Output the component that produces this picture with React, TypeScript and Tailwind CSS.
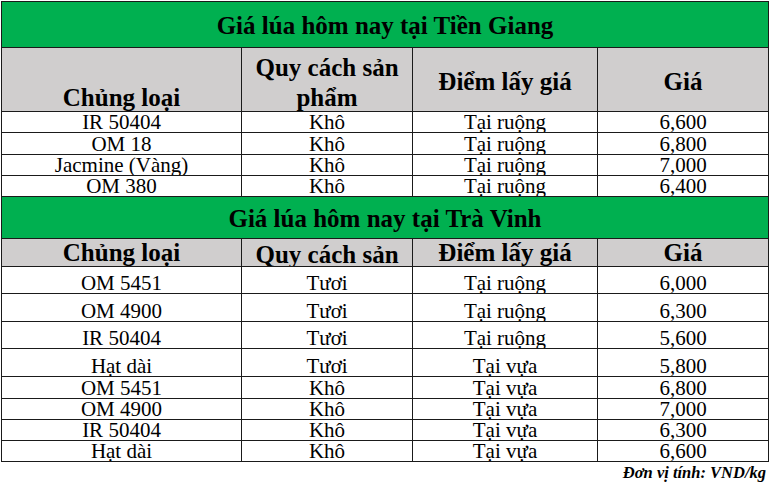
import React from 'react';

type Row = { name: string; spec: string; place: string; price: string; h: string };

const tienGiang: Row[] = [
  { name: 'IR 50404', spec: 'Khô', place: 'Tại ruộng', price: '6,600', h: 'h-[21px]' },
  { name: 'OM 18', spec: 'Khô', place: 'Tại ruộng', price: '6,800', h: 'h-[22px]' },
  { name: 'Jacmine (Vàng)', spec: 'Khô', place: 'Tại ruộng', price: '7,000', h: 'h-[21px]' },
  { name: 'OM 380', spec: 'Khô', place: 'Tại ruộng', price: '6,400', h: 'h-[21px]' },
];

const traVinh: Row[] = [
  { name: 'OM 5451', spec: 'Tươi', place: 'Tại ruộng', price: '6,000', h: 'h-[27px]' },
  { name: 'OM 4900', spec: 'Tươi', place: 'Tại ruộng', price: '6,300', h: 'h-[28px]' },
  { name: 'IR 50404', spec: 'Tươi', place: 'Tại ruộng', price: '5,600', h: 'h-[27px]' },
  { name: 'Hạt dài', spec: 'Tươi', place: 'Tại vựa', price: '5,800', h: 'h-[28px]' },
  { name: 'OM 5451', spec: 'Khô', place: 'Tại vựa', price: '6,800', h: 'h-[22px]' },
  { name: 'OM 4900', spec: 'Khô', place: 'Tại vựa', price: '7,000', h: 'h-[21px]' },
  { name: 'IR 50404', spec: 'Khô', place: 'Tại vựa', price: '6,300', h: 'h-[21px]' },
  { name: 'Hạt dài', spec: 'Khô', place: 'Tại vựa', price: '6,600', h: 'h-[21px]' },
];

const grid = 'grid grid-cols-[240px_171px_185px_171px]';
const cell = 'flex justify-center overflow-hidden border-r border-b border-[#1a1a1a]';

const TitleRow = ({ text, h }: { text: string; h: string }) => (
  <div
    className={`${h} flex items-center justify-center border-r border-b border-[#1a1a1a] bg-[#00b050] pt-[3px] text-[25px] font-bold leading-[30px] text-black`}
  >
    {text}
  </div>
);

const DataRow = ({ row }: { row: Row }) => (
  <div className={`${grid} ${row.h} text-[21px] leading-[20px] text-black`}>
    {[row.name, row.spec, row.place, row.price].map((v, i) => (
      <div key={i} className={`${cell} items-end`}>
        <span className="whitespace-nowrap">{v}</span>
      </div>
    ))}
  </div>
);

const App: React.FC = () => {
  return (
    <div
      className="min-h-[489px] w-[770px] bg-white pt-px pl-px"
      style={{ fontFamily: '"Liberation Serif", "Times New Roman", serif' }}
    >
      <div className="w-[768px] border-l border-t border-[#1a1a1a]">
        {/* Tiền Giang */}
        <TitleRow text="Giá lúa hôm nay tại Tiền Giang" h="h-[46px]" />
        <div className={`${grid} h-[64px] bg-[#d0cece] text-[25px] font-bold leading-[30px]`}>
          <div className={`${cell} items-end`}>
            <span className="-mb-[2px]">Chủng loại</span>
          </div>
          <div className={`${cell} items-end`}>
            <span className="-mb-[2px] text-center">
              Quy cách sản
              <br />
              phẩm
            </span>
          </div>
          <div className={`${cell} items-center pt-[4px]`}>Điểm lấy giá</div>
          <div className={`${cell} items-center pt-[4px]`}>Giá</div>
        </div>
        {tienGiang.map((r, i) => (
          <DataRow key={i} row={r} />
        ))}

        {/* Trà Vinh */}
        <TitleRow text="Giá lúa hôm nay tại Trà Vinh" h="h-[42px]" />
        <div className={`${grid} h-[28px] bg-[#d0cece] text-[25px] font-bold leading-[30px]`}>
          <div className={`${cell} items-end`}>
            <span className="-mb-[2px] whitespace-nowrap">Chủng loại</span>
          </div>
          <div className={`${cell} items-start`}>
            <span className="mt-[1px] whitespace-nowrap">Quy cách sản</span>
          </div>
          <div className={`${cell} items-end`}>
            <span className="-mb-[2px] whitespace-nowrap">Điểm lấy giá</span>
          </div>
          <div className={`${cell} items-end`}>
            <span className="-mb-[2px]">Giá</span>
          </div>
        </div>
        {traVinh.map((r, i) => (
          <DataRow key={i} row={r} />
        ))}
      </div>
      <div className="flex h-[22px] w-[768px] items-center justify-end pr-[3px] text-[16.5px] font-bold italic text-black">
        Đơn vị tính: VND/kg
      </div>
    </div>
  );
};

export default App;
